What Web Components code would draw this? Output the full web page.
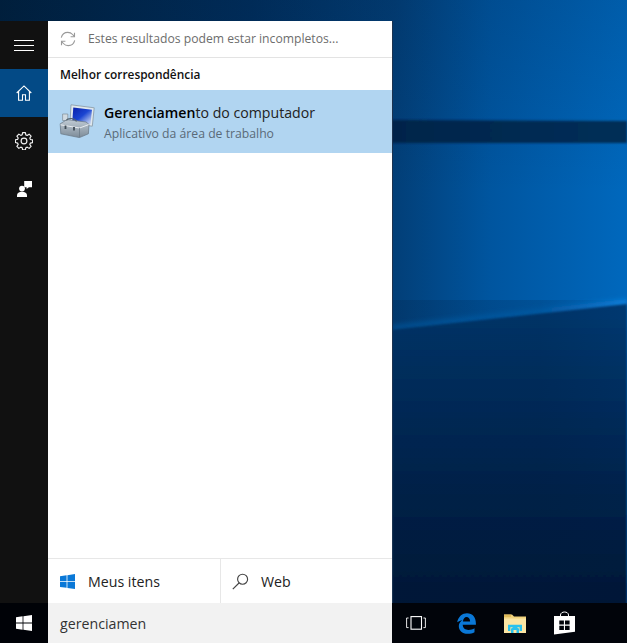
<!DOCTYPE html>
<html lang="pt-BR"><head><meta charset="utf-8"><title>Pesquisa</title>
<style>html,body{margin:0;padding:0;background:#001b3a}body{width:627px;height:643px;overflow:hidden;font-family:"Open Sans","Noto Sans",sans-serif}</style>
</head><body>
<desktop-shell>
  <search-flyout slot="flyout">
    <nav-rail slot="rail"></nav-rail>
    <status-line slot="status">Estes resultados podem estar incompletos...</status-line>
    <section-label slot="label">Melhor correspondência</section-label>
    <result-row slot="result" strong="Gerenciamen" rest="to do computador" sub="Aplicativo da área de trabalho"></result-row>
    <scope-tabs slot="tabs"></scope-tabs>
  </search-flyout>
  <task-bar slot="taskbar" query="gerenciamen"></task-bar>
</desktop-shell>
<script>
const def=(name,html)=>customElements.define(name,class extends HTMLElement{
  constructor(){super();this.attachShadow({mode:'open'})}
  connectedCallback(){this.shadowRoot.innerHTML=typeof html==='function'?html(this):html;}
});
const FONT='"Open Sans","Noto Sans",sans-serif';
def('desktop-shell',`<style>
:host{display:grid;position:relative;width:627px;height:643px;grid-template-rows:21px 582px 40px;grid-template-columns:392px 1fr;overflow:hidden;background:#012c5c}
.wall{position:absolute;inset:0;width:627px;height:643px}
::slotted([slot=flyout]){grid-row:2;grid-column:1;position:relative}
::slotted([slot=taskbar]){grid-row:3;grid-column:1/3;position:relative}
</style>
<svg class="wall" viewBox="0 0 627 643" aria-hidden="true"><defs>
<linearGradient id="h" x1="0" x2="1" y1="0" y2="0"><stop offset="0" stop-color="#00213f"/><stop offset=".4" stop-color="#002f5e"/><stop offset=".63" stop-color="#023f78"/><stop offset=".78" stop-color="#00559f"/><stop offset="1" stop-color="#0068bd"/></linearGradient>
<linearGradient id="v" x1="0" x2="0" y1="0" y2="1"><stop offset="0" stop-color="#000d26" stop-opacity=".12"/><stop offset=".3" stop-color="#000d26" stop-opacity="0"/></linearGradient>
<linearGradient id="low" x1="0" x2="0" y1="0" y2="1"><stop offset="0" stop-color="#003a72"/><stop offset=".3" stop-color="#002c5c"/><stop offset=".75" stop-color="#001b3e"/><stop offset="1" stop-color="#00152f"/></linearGradient>
<linearGradient id="low2" x1="0" x2="1" y1="0" y2="0"><stop offset=".63" stop-color="#001a38" stop-opacity=".35"/><stop offset="1" stop-color="#001a38" stop-opacity="0"/></linearGradient>
<linearGradient id="band" x1="0" x2="1" y1="0" y2="0"><stop offset=".62" stop-color="#00244a"/><stop offset="1" stop-color="#002f58"/></linearGradient>
<linearGradient id="glow" x1="0" x2="1" y1="0" y2="0"><stop offset=".62" stop-color="#0a6cc0" stop-opacity=".55"/><stop offset="1" stop-color="#0d80dc"/></linearGradient>
<filter id="b1" x="-5%" y="-50%" width="110%" height="200%"><feGaussianBlur stdDeviation="1"/></filter>
<filter id="b2" x="-5%" y="-50%" width="110%" height="200%"><feGaussianBlur stdDeviation="2.5"/></filter>
</defs>
<rect width="627" height="643" fill="url(#h)"/>
<rect width="627" height="643" fill="url(#v)"/>
<polygon points="0,118 627,121 627,143 0,143" fill="url(#band)" filter="url(#b1)"/>
<polygon points="392,325 627,299 627,307 392,331" fill="url(#glow)" filter="url(#b2)"/>
<polygon points="392,330 627,304 627,643 392,643" fill="url(#low)" filter="url(#b1)"/>
<rect x="392" y="300" width="235" height="343" fill="url(#low2)" opacity=".5"/>
</svg><slot name="flyout"></slot><slot name="taskbar"></slot>`);
def('search-flyout',`<style>
:host{display:grid;grid-template-columns:48px 344px;height:582px;box-shadow:1px 0 0 #1c3350}
.main{display:flex;flex-direction:column;background:#fff;height:582px}
.grow{flex:1}
</style><slot name="rail"></slot><div class="main"><slot name="status"></slot><slot name="label"></slot><slot name="result"></slot><div class="grow"></div><slot name="tabs"></slot></div>`);
def('nav-rail',`<style>
:host{display:flex;flex-direction:column;background:#111;height:582px}
.b{height:48px;display:flex;align-items:center;justify-content:center}
.on{background:#034a86}
svg{display:block}
</style>
<div class="b"><svg width="20" height="11" viewBox="0 0 20 11"><path d="M0 .5h20M0 5.500h20M0 10.500h20" stroke="#fff" fill="none"/></svg></div>
<div class="b on"><svg width="16" height="16" viewBox="0 0 16 16" fill="none" stroke="#fff" stroke-width="1.1"><path d="M.7 8 8 .9 15.300 8M2.600 6.400v8.900h3.900V9.700h3v5.600h3.900V6.400"/></svg></div>
<div class="b"><svg width="18" height="18" viewBox="0 0 18 18" fill="none" stroke="#f2f2f2" stroke-width="1.15" stroke-linejoin="round"><path d="M7.600 1h2.800l.4 2.300 1.400.6 1.900-1.300 2 2-1.300 1.900.6 1.400 2.200.4v2.700l-2.200.5-.6 1.400 1.300 1.900-2 2-1.900-1.300-1.400.6-.4 2.200H7.600l-.4-2.200-1.400-.6-1.900 1.300-2-2 1.300-1.900-.6-1.400L.4 10.900V8.200l2.200-.4.6-1.400-1.300-1.900 2-2 1.900 1.300 1.400-.6z" transform="translate(0 -.4)"/><circle cx="9" cy="9" r="2.900"/></svg></div>
<div class="b"><svg width="15" height="16" viewBox="0 0 15 16" fill="#fff"><path d="M7.200 0H15v6.200h-3.100L9.600 8V6.200H7.200z"/><circle cx="5" cy="7.600" r="2.900"/><path d="M0 16v-1.700c0-2.200 2-3.500 5-3.500s5 1.300 5 3.500V16z"/></svg></div>`);
def('status-line',`<style>
:host{display:flex;align-items:center;height:37px;box-sizing:border-box;border-bottom:1px solid #e3e3e3;padding:0 0 0 12px;font:12.18px/16px ${FONT};color:#6d6d6d}
svg{margin-right:12px;margin-top:-1px}
</style><svg width="16" height="16" viewBox="0 0 16 16" fill="none" stroke="#9a9a9a" stroke-width="1.1"><path d="M1.300 6.700C2 3.600 4.600 1.400 7.800 1.400c1.900 0 3.600.8 4.800 2.100l1.900 2"/><path d="M14.500 1.800v3.900h-3.900M14.700 9.300c-.7 3.100-3.400 5.300-6.500 5.300-1.900 0-3.600-.8-4.800-2.100l-1.900-2"/><path d="M1.500 14.200v-3.900h3.900"/></svg><slot></slot>`);
def('section-label',`<style>
:host{display:flex;align-items:center;height:32px;padding-left:12px;font:600 11.9px/16px ${FONT};color:#111}
</style><slot></slot>`);
def('tool-icon',`<style>:host{display:block;width:36px;height:34px;margin-top:-1px}svg{display:block}</style>
<svg width="36" height="34" viewBox="0 0 36 34"><defs>
<linearGradient id="s" x1="0" y1="0" x2="1" y2="1"><stop offset="0" stop-color="#0a1fa8"/><stop offset=".5" stop-color="#1a45d2"/><stop offset=".85" stop-color="#a9bcec"/><stop offset="1" stop-color="#c8d4f2"/></linearGradient>
<linearGradient id="b" x1="0" y1="0" x2="0" y2="1"><stop offset="0" stop-color="#c0cbd4"/><stop offset="1" stop-color="#7d8c99"/></linearGradient></defs>
<path d="M12 .8 35.200 3.800 33.300 22.200 11 19.200z" fill="#dfe8ee" stroke="#8797a3" stroke-width=".8"/>
<path d="M14.300 3.400 33 5.800 31.500 20 13.300 17.500z" fill="url(#s)"/>
<path d="M3.600 10h5.200v6.500H3.600z" fill="#d0dae1" stroke="#7f8d97" stroke-width=".7"/>
<path d="M1.200 19.800 8 15.600 27 18 30 20.400 29.400 29.800 20.400 33.600 1.800 29.800z" fill="url(#b)" stroke="#677683" stroke-width=".7"/>
<path d="M1.500 20.800 20.600 24 29.700 20.600" fill="none" stroke="#eef2f5" stroke-width=".9"/><path d="M20.500 24v9.400" stroke="#677683" stroke-width=".7"/>
<path d="M6.500 21.600v3.400M15 23v3.400" stroke="#3f4b55" stroke-width="1.800"/>
<path d="M7.500 16.500c1.200-3 8.500-2.600 10 1" fill="none" stroke="#56646f" stroke-width="1.100"/></svg>`);
def('result-row',h=>`<style>
:host{display:flex;align-items:center;height:63px;background:#b1d5f1;padding-left:11px}
.t{margin-left:9px;display:flex;flex-direction:column;padding-top:2px}
.a{font:14.15px/20px ${FONT};color:#222;white-space:nowrap}
b{font-weight:600;color:#000}
.s{font:12.22px/17px ${FONT};color:#5a6a78;margin-top:2px;white-space:nowrap}
</style><tool-icon></tool-icon><div class="t"><div class="a"><b>${h.getAttribute('strong')}</b>${h.getAttribute('rest')}</div><div class="s">${h.getAttribute('sub')}</div></div>`);
def('scope-tabs',`<style>
:host{display:grid;grid-template-columns:173px 171px;height:45px;box-sizing:border-box;border-top:1px solid #e7e7e7;font:14.2px/20px ${FONT};color:#222}
div{display:flex;align-items:center}
span{position:relative;top:1px}
.l{padding-left:12px;gap:13px;border-right:1px solid #e7e7e7;box-sizing:border-box;height:44px}
.r{padding-left:11px;gap:12px}
svg{display:block}
</style>
<div class="l"><svg width="15" height="15" viewBox="0 0 15 15" fill="#0a78d7"><path d="M0 2.200 6.600 1.300v5.900H0zM7.400 1.200 15 0v7.200H7.400zM0 8h6.600v5.800L0 12.900zM7.400 8H15v7l-7.600-1.100z"/></svg><span>Meus itens</span></div>
<div class="r"><svg width="17" height="17" viewBox="0 0 17 17" fill="none" stroke="#444" stroke-width="1.15"><circle cx="10.600" cy="6.200" r="5"/><path d="M7 10 .8 16.200"/></svg><span>Web</span></div>`);
def('task-bar',h=>`<style>
:host{display:grid;grid-template-columns:48px 344px 1fr;height:40px;background:#01040a}
.st{display:flex;align-items:center;justify-content:center;background:#000207}
.q{background:#f2f2f2;display:flex;align-items:center;padding:1px 0 0 12px;font:14.2px/20px ${FONT};color:#333}
.i{display:flex;align-items:center;padding-left:14px}
.i svg{display:block}
</style>
<div class="st"><svg width="16" height="16" viewBox="0 0 16 16" fill="#fff"><path d="M0 2.300 6.600 1.300v6.300H0zM7.400 1.200 16 0v7.600H7.400zM0 8.400h6.600v6.300L0 13.700zM7.400 8.400H16V16l-8.600-1.200z"/></svg></div>
<div class="q">${h.getAttribute('query')}</div>
<div class="i">
<svg width="20" height="14" viewBox="0 0 20 14" fill="none" stroke="#fff"><rect x="5" y=".6" width="10.500" height="12.600" stroke-width="1.100"/><path d="M2.600 2H.6v9.600h2M17.400 2h2v9.600h-2" stroke-width=".9"/></svg>
<svg style="margin-left:31px" width="19" height="21" viewBox="0 0 19 21" fill="#0a78d7"><path d="M.2 9.200C1.200 3.500 5.400.2 10 .2c5.600 0 8.900 4 8.900 10.300v1.300H5.700c.2 3.600 2.800 5.100 5.700 5.100 2.300 0 4.500-.7 6.100-1.700v4c-1.800 1.100-4.200 1.600-6.600 1.600C4.900 20.800 1.700 17 1.800 13c0-2.500 1.400-4.700 3.600-6.100C3.600 7.300 1.700 8.100.2 9.200zM5.900 8.400h7.200C13 5.800 11.600 4.100 9.500 4.100c-1.800 0-3.100 1.900-3.600 4.300z"/></svg>
<svg style="margin-left:28px" width="22" height="19" viewBox="0 0 22 19"><path d="M0 .6h8l2 2h12V19H0z" fill="#f0d27c"/><path d="M0 .6h7v2.400H0z" fill="#dfba5a"/><path d="M0 4.500h22V19H0z" fill="#fbe6a4"/><path d="M7 19v-4.300L11 11.500l4 3.200V19h-2.500v-3h-3v3z" fill="#28c2ee"/><path d="M5.200 17v-5h11.600v5" fill="none" stroke="#28c2ee" stroke-width="2.400"/></svg>
<svg style="margin-left:28px" width="21" height="24" viewBox="0 0 21 24"><path d="M6.500 7V4c0-4 8-4 8 0v3" fill="none" stroke="#fff" stroke-width="1"/><path d="M0 5h21v15.800L0 23.500z" fill="#fff"/><path d="M5.300 9.400h4.600v4.200H5.300zM11 9.400h4.600v4.200H11zM5.300 14.700h4.600v4.300H5.300zM11 14.700h4.600v4.300H11z" fill="#01040a"/></svg>
</div>`);
</script>
</body></html>
